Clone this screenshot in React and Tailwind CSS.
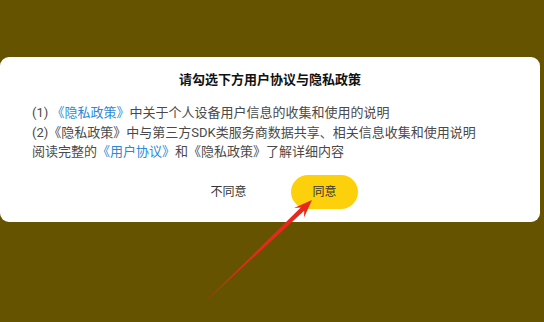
export default function App() {
  return (
    <div
      className="relative h-[322px] w-[544px] overflow-hidden bg-[#655300] pt-[57px]"
      style={{ fontFamily: 'Roboto, "Noto Sans CJK SC", sans-serif' }}
    >
      <div className="h-[165px] w-[540px] rounded-[9px] bg-white pt-[13px]">
        <h1 className="text-center text-[13px] font-bold leading-[20px] text-[#111]">
          请勾选下方用户协议与隐私政策
        </h1>
        <div className="mt-[13px] pl-[32px] text-[13px] leading-[19.5px] text-[#4a4a4a]">
          <p>
            (1) <span className="text-[#2a8ad8]">《隐私政策》</span>中关于个人设备用户信息的收集和使用的说明
          </p>
          <p>(2)《隐私政策》中与第三方SDK类服务商数据共享、相关信息收集和使用说明</p>
          <p>
            阅读完整的<span className="text-[#2a8ad8]">《用户协议》</span>和《隐私政策》了解详细内容
          </p>
        </div>
        <div className="mt-[13px] ml-[13px] flex justify-center gap-[29px]">
          <button className="h-[34px] w-[67px] text-[12px] text-[#333]">不同意</button>
          <button className="h-[34px] w-[67px] rounded-full bg-[#fdd00c] text-[12px] text-[#333]">
            同意
          </button>
        </div>
      </div>
      <svg className="absolute left-0 top-0" width="544" height="322" viewBox="0 0 544 322">
        <polygon
          points="205,302 304.2,210.8 304,217.6 312,200 294,208 300.8,207.4"
          fill="#e8281d"
        />
      </svg>
    </div>
  );
}
